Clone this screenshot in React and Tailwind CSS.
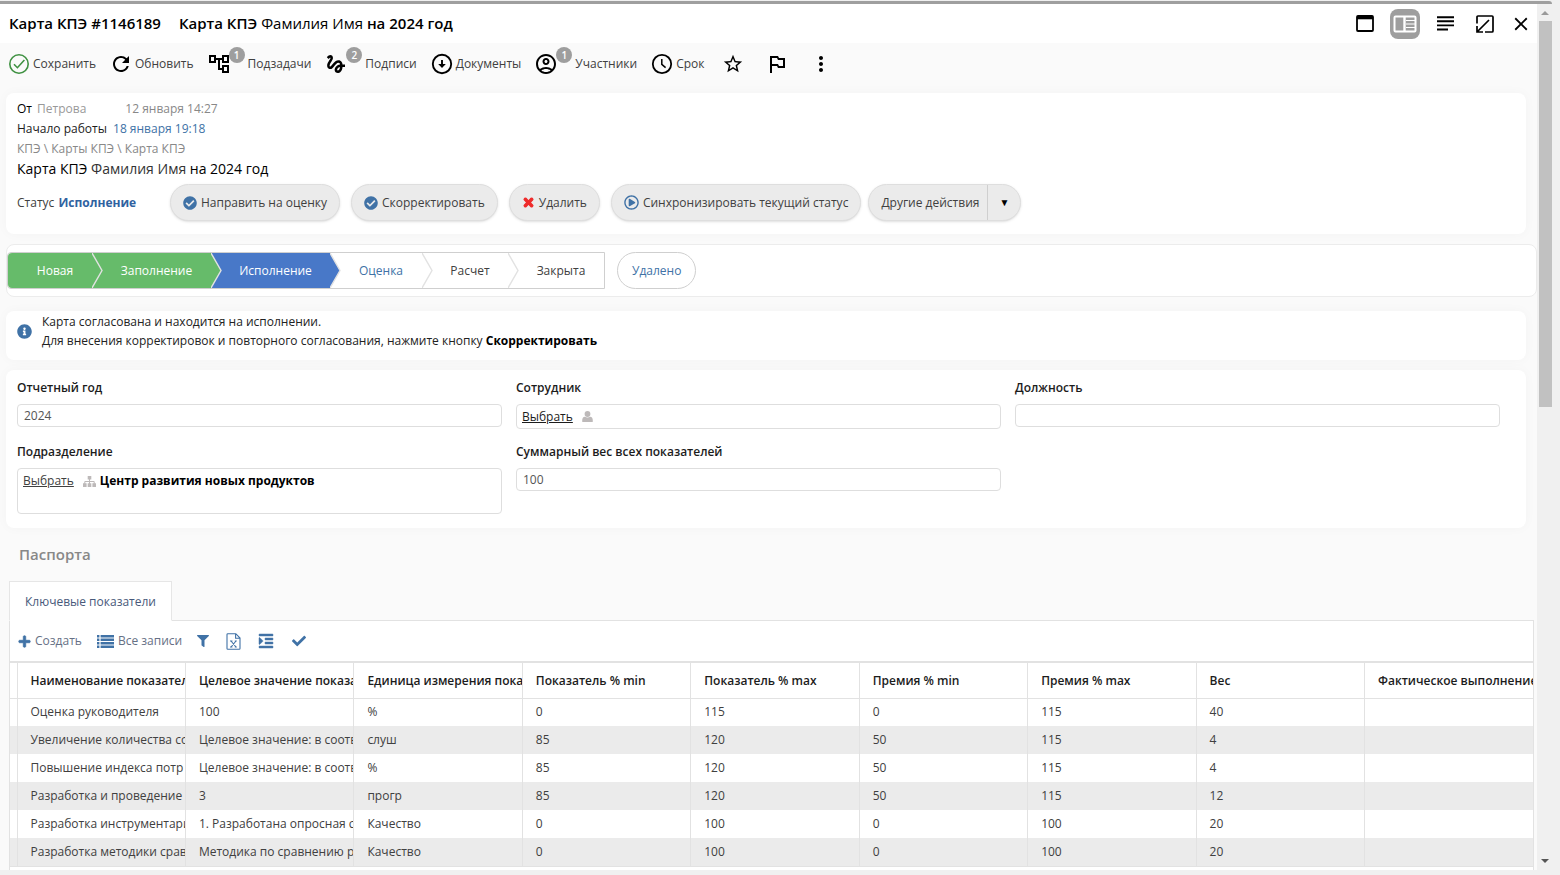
import React from "react";
import { FaCheck, FaCheckCircle, FaFilter, FaIndent, FaInfoCircle, FaPlus, FaRegPlayCircle, FaTimes } from "react-icons/fa";
import { MdClose, MdGesture, MdMoreVert, MdOutlineAccountCircle, MdOutlineAccountTree, MdOutlinedFlag, MdRefresh, MdStarBorder } from "react-icons/md";

const columns = [
    'Наименование показател',
    'Целевое значение показа',
    'Единица измерения пока',
    'Показатель % min',
    'Показатель % max',
    'Премия % min',
    'Премия % max',
    'Вес',
    'Фактическое выполнение',
];

const rows = [
    ['Оценка руководителя', '100', '%', '0', '115', '0', '115', '40', ''],
    ['Увеличение количества со', 'Целевое значение: в соотв', 'слуш', '85', '120', '50', '115', '4', ''],
    ['Повышение индекса потр', 'Целевое значение: в соотв', '%', '85', '120', '50', '115', '4', ''],
    ['Разработка и проведение', '3', 'прогр', '85', '120', '50', '115', '12', ''],
    ['Разработка инструментари', '1. Разработана опросная с', 'Качество', '0', '100', '0', '100', '20', ''],
    ['Разработка методики срав', 'Методика по сравнению р', 'Качество', '0', '100', '0', '100', '20', ''],
];

const SaveIcon = () => (
    <svg viewBox="0 0 24 24" className="w-6 h-6 text-[#3f9142]" fill="none" stroke="currentColor" strokeWidth="1.6">
        <circle cx="12" cy="12" r="9.2" />
        <path d="M7 12.3l3.4 3.4L17.4 8" />
    </svg>
);

const DownloadIcon = () => (
    <svg viewBox="0 0 24 24" className="w-6 h-6" fill="none" stroke="currentColor" strokeWidth="1.9">
        <circle cx="12" cy="12" r="9.200" />
        <path d="M12 8v5" />
        <path d="M8.2 12h7.6L12 16z" fill="currentColor" stroke="none" />
    </svg>
);

const ClockIcon = () => (
    <svg viewBox="0 0 24 24" className="w-6 h-6" fill="none" stroke="currentColor" strokeWidth="1.8">
        <circle cx="12" cy="12" r="9.2" />
        <path d="M11.8 7v5.4l3.8 3.2" strokeWidth="1.5" />
    </svg>
);

const WindowIcon = () => (
    <svg viewBox="0 0 18 17" className="w-[18px] h-[17px]" fill="none" stroke="currentColor" strokeWidth="1.8">
        <rect x="1" y="1" width="16" height="15" rx="1" />
        <path d="M1 2.6h16" strokeWidth="3.4" />
    </svg>
);

const SplitIcon = () => (
    <svg viewBox="0 0 24 18" className="w-6 h-[18px]" fill="none" stroke="white" strokeWidth="2">
        <rect x="1.5" y="1.5" width="21" height="15" rx="1" />
        <path d="M11.5 2v14" strokeWidth="2.4" />
        <path d="M13 5.5h9M13 9h9M13 12.5h9" strokeWidth="1.2" />
    </svg>
);

const NotesIcon = () => (
    <svg viewBox="0 0 17 15" className="w-[17px] h-[15px]" fill="none" stroke="currentColor" strokeWidth="1.9">
        <path d="M0 1.200h17M0 5.300h17M0 9.400h17M0 13.500h11" />
    </svg>
);

const PopinIcon = () => (
    <svg viewBox="0 0 18 18" className="w-[18px] h-[18px]" fill="none" stroke="currentColor" strokeWidth="1.7">
        <path d="M1 8.500V2q0-1 1-1h14q1 0 1 1v14q0 1-1 1H9" />
        <path d="M13 5L1.500 16.500M1 11V17h6" />
    </svg>
);

const ListIcon = () => (
    <svg viewBox="0 0 17 13" className="w-[17px] h-[13px] text-[#4072a6]" fill="none" stroke="currentColor" strokeWidth="2.4">
        <path d="M0 1.3h2.4M3.600 1.3H17M0 4.8h2.4M3.600 4.8H17M0 8.3h2.4M3.600 8.3H17M0 11.8h2.4M3.600 11.8H17" />
    </svg>
);

const ExcelIcon = () => (
    <svg viewBox="0 0 15 17" className="w-[15px] h-[17px] text-[#4072a6]" fill="none" stroke="currentColor" strokeWidth="1.1">
        <path d="M1 1.5q0-.8.8-.8h8L14 5v10.5q0 .8-.8.8H1.8q-.8 0-.8-.8zM9.6.8v4.4H14" />
        <path d="M5 8l5 6M10 8l-5 6M4 8h2.4M8.8 8h2M4 14h2.4M8.8 14h2" />
    </svg>
);

const PersonIcon = () => (
    <svg viewBox="0 0 11 11" className="w-[11px] h-[11px] text-[#bdb9b9]" fill="currentColor">
        <circle cx="5.5" cy="3" r="2.9" />
        <path d="M.3 11q-.6-5 2.6-5.3 2.6 1.5 5.2 0Q11.3 6 10.7 11z" />
    </svg>
);

const OrgIcon = () => (
    <svg viewBox="0 0 13 11" className="w-[13px] h-[11px] ml-[9px] mr-1 mt-1 text-[#bdb9b9]" fill="currentColor">
        <path d="M4.700 0h3.600v3.600H4.700zM0 7.200h3.600V11H0zM4.700 7.200h3.600V11H4.700zM9.400 7.200H13V11H9.400z" />
        <path d="M6.500 3v5M1.800 8V5.500h9.400V8" fill="none" stroke="currentColor" />
    </svg>
);

const ToolbarItem = ({icon, label, badge, title}) => (
    <button type="button" aria-label={title} className="flex items-center gap-[2px]">
        <span className="relative flex w-6 h-6 items-center justify-center text-black">
            {icon}
            {badge && (
                <span className="absolute left-[22px] -top-[5px] w-4 h-4 rounded-full bg-[#9e9e9e] text-white text-[10px] leading-4 font-semibold text-center">
                    {badge}
                </span>
            )}
        </span>
        {label && <span className={badge ? "ml-[15px]" : ""}>{label}</span>}
    </button>
);

const ActionButton = ({icon, children}) => (
    <button type="button" className="flex items-center gap-1 h-[37px] px-3 rounded-full bg-[#ebebeb] border border-[#dedede] shadow-sm">
        {icon}
        {children}
    </button>
);

const Card = ({className, children}) => (
    <section className={`bg-white rounded-lg shadow-[0_0_12px_rgba(0,0,0,0.03)] ${className}`}>
        {children}
    </section>
);

const Field = ({id, label, value}) => (
    <div>
        <label htmlFor={id} className="block h-[26px] leading-5 font-semibold text-[#1c1c1c]">{label}</label>
        <input id={id} type="text" defaultValue={value} className="block w-full h-[23px] px-[6px] border border-[#dedede] rounded text-[#555] focus:outline-none" />
    </div>
);

const Stage = ({label, fill, line, text, width, last}) => (
    <li className={`relative flex items-center justify-center h-full ${fill} ${text} ${width}`}>
        {label}
        {!last && (
            <svg viewBox="0 0 11 36" preserveAspectRatio="none" className={`absolute z-10 left-full top-0 w-[11px] h-full ${line}`}>
                <path d="M0 0L10 18L0 36z" fill="currentColor" />
                <path d="M0 0L10 18L0 36" fill="none" stroke="#e2e2e2" strokeWidth="1.4" />
            </svg>
        )}
    </li>
);

const App = () => {
    return (
        <div className="flex flex-col h-screen overflow-hidden bg-[#f0f0f0] pt-px pb-[5px] pr-2 font-['Open_Sans','Noto_Sans',sans-serif] text-[12px] text-[#404040]">
            <div className="h-[3px] shrink-0 bg-[#9f9f9f] rounded-tr-lg" />
            <div className="flex flex-1 min-h-0">
                <main className="flex-1 min-w-0 overflow-hidden bg-[#fafafa]">
                    <header className="flex items-center justify-between h-[39px] pl-[9px] bg-white text-black">
                        <h1 className="flex gap-[18px] text-[15px] font-semibold">
                            <span>Карта КПЭ #1146189</span>
                            <span>Карта КПЭ <span className="font-medium">Фамилия Имя</span> на 2024 год</span>
                        </h1>
                        <div className="flex items-center">
                            <button type="button" aria-label="Окно" className="flex w-10 justify-center"><WindowIcon /></button>
                            <button type="button" aria-label="Две панели" className="flex w-10 justify-center">
                                <span className="flex items-center justify-center w-[30px] h-[30px] rounded-lg bg-[#9e9e9e]"><SplitIcon /></span>
                            </button>
                            <button type="button" aria-label="Список" className="flex w-10 justify-center"><NotesIcon /></button>
                            <button type="button" aria-label="Свернуть" className="flex w-10 justify-center"><PopinIcon /></button>
                            <button type="button" aria-label="Закрыть" className="flex w-8 justify-center"><MdClose size={22} /></button>
                        </div>
                    </header>

                    <nav className="flex items-center gap-[13px] h-[42px] pl-[7px]">
                        <ToolbarItem icon={<SaveIcon />} label="Сохранить" />
                        <ToolbarItem icon={<MdRefresh size={26} />} label="Обновить" />
                        <ToolbarItem icon={<MdOutlineAccountTree size={24} />} label="Подзадачи" badge="1" />
                        <ToolbarItem icon={<MdGesture size={24} />} label="Подписи" badge="2" />
                        <ToolbarItem icon={<DownloadIcon />} label="Документы" />
                        <ToolbarItem icon={<MdOutlineAccountCircle size={24} />} label="Участники" badge="1" />
                        <ToolbarItem icon={<ClockIcon />} label="Срок" />
                        <div className="flex gap-5 pl-1">
                            <ToolbarItem icon={<MdStarBorder size={22} />} title="В избранное" />
                            <ToolbarItem icon={<MdOutlinedFlag size={24} />} title="Флаг" />
                            <ToolbarItem icon={<MdMoreVert size={24} />} title="Ещё" />
                        </div>
                    </nav>

                    <Card className="mt-2 ml-[6px] mr-[11px] pl-[11px] pt-[6px] h-[141px]">
                        <p className="leading-5">
                            <span className="text-black">От</span> <span className="ml-[2px] text-[#999]">Петрова</span>
                            <span className="ml-[39px] text-[#888]">12 января 14:27</span>
                        </p>
                        <p className="leading-5"><span className="text-[#1c1c1c]">Начало работы</span> <span className="ml-[3px] text-[#4072a6]">18 января 19:18</span></p>
                        <p className="leading-5 text-[#888]">КПЭ \ Карты КПЭ \ Карта КПЭ</p>
                        <p className="leading-5 text-[14px] text-black">Карта КПЭ <span className="text-[#333]">Фамилия Имя</span> на 2024 год</p>
                        <div className="flex items-center mt-[5px] gap-[11px]">
                            <div className="w-[142px]">Статус <b className="ml-px text-[#2f62a0]">Исполнение</b></div>
                            <ActionButton icon={<FaCheckCircle size={14} className="text-[#4072a6]" />}>Направить на оценку</ActionButton>
                            <ActionButton icon={<FaCheckCircle size={14} className="text-[#4072a6]" />}>Скорректировать</ActionButton>
                            <ActionButton icon={<FaTimes size={13} stroke="currentColor" strokeWidth="45" className="text-[#ee2b2b]" />}>Удалить</ActionButton>
                            <ActionButton icon={<FaRegPlayCircle size={15} className="text-[#4072a6]" />}>Синхронизировать текущий статус</ActionButton>
                            <div className="flex items-stretch h-[37px] -ml-1 rounded-full bg-[#ebebeb] border border-[#dedede] shadow-sm">
                                <button type="button" className="pl-3 pr-2">Другие действия</button>
                                <button type="button" aria-label="Ещё действия" className="w-[33px] border-l border-[#cfcfcf] text-black text-[10px]">▼</button>
                            </div>
                        </div>
                    </Card>

                    <section className="flex items-center gap-3 mt-[10px] ml-[6px] h-[53px] bg-white border border-[#ececec] rounded-lg">
                        <ol className="flex h-[37px] border border-[#cfcfcf] rounded-l">
                            <Stage label="Новая" fill="bg-[#66bb6a] rounded-l" line="text-[#66bb6a]" text="text-white pl-[10px]" width="w-[84px]" />
                            <Stage label="Заполнение" fill="bg-[#66bb6a]" line="text-[#66bb6a]" text="text-white pl-[10px]" width="w-[119px]" />
                            <Stage label="Исполнение" fill="bg-[#4878c8]" line="text-[#4878c8]" text="text-white pl-[10px]" width="w-[119px]" />
                            <Stage label="Оценка" fill="bg-white" line="text-white" text="text-[#4072a6] pl-[10px]" width="w-[92px]" />
                            <Stage label="Расчет" fill="bg-white" line="text-white" text="pl-[10px]" width="w-[86px]" />
                            <Stage label="Закрыта" fill="bg-white" line="text-white" text="pl-[10px]" width="w-[96px]" last />
                        </ol>
                        <button type="button" className="h-[37px] px-[14px] border border-[#cfcfcf] rounded-full text-[#4072a6]">Удалено</button>
                    </section>

                    <Card className="flex items-start gap-[10px] mt-[14px] ml-[6px] mr-[11px] pl-[11px] pt-px h-[49px]">
                        <FaInfoCircle size={15} className="mt-3 text-[#4072a6]" />
                        <p className="leading-[19px] text-[#222]">
                            Карта согласована и находится на исполнении.<br />
                            Для внесения корректировок и повторного согласования, нажмите кнопку <b className="text-black">Скорректировать</b>
                        </p>
                    </Card>

                    <Card className="grid grid-cols-3 gap-x-[14px] mt-[10px] ml-[6px] mr-[11px] pl-[11px] pr-[26px] pt-2 pb-[14px]">
                        <div className="h-16"><Field id="year" label="Отчетный год" value="2024" /></div>
                        <div>
                            <div className="h-[26px] leading-5 font-semibold text-[#1c1c1c]">Сотрудник</div>
                            <div className="flex items-center gap-[9px] h-[25px] px-[5px] border border-[#dedede] rounded">
                                <a href="#employee" className="underline text-[#1c1c1c]">Выбрать</a>
                                <PersonIcon />
                            </div>
                        </div>
                        <Field id="position" label="Должность" value="" />
                        <div>
                            <div className="h-[26px] leading-5 font-semibold text-[#1c1c1c]">Подразделение</div>
                            <div className="flex items-start h-[46px] px-[5px] pt-[3px] border border-[#dedede] rounded">
                                <a href="#department" className="underline">Выбрать</a>
                                <OrgIcon />
                                <b className="text-black">Центр развития новых продуктов</b>
                            </div>
                        </div>
                        <Field id="weight" label="Суммарный вес всех показателей" value="100" />
                    </Card>

                    <h2 className="mt-[14px] ml-[19px] leading-6 text-[15px] font-semibold text-[#888]">Паспорта</h2>

                    <section className="mt-[15px] ml-[9px] mr-[3px]">
                        <button type="button" className="block relative z-10 -mb-px h-10 px-[15px] pt-px bg-white border border-b-white border-[#e6e6e6] text-[#48597a]">Ключевые показатели</button>
                        <div className="bg-white border border-[#e2e2e2]">
                            <div className="flex items-center h-10 pl-2 text-[#667085]">
                                <button type="button" className="flex items-center gap-1"><FaPlus size={13} stroke="currentColor" strokeWidth="30" className="text-[#4072a6]" />Создать</button>
                                <button type="button" className="flex items-center gap-1 ml-[15px]"><ListIcon />Все записи</button>
                                <button type="button" aria-label="Фильтр" className="ml-[15px]"><FaFilter size={12} className="text-[#4072a6]" /></button>
                                <button type="button" aria-label="Экспорт в Excel" className="ml-[17px]"><ExcelIcon /></button>
                                <button type="button" aria-label="Отступ" className="ml-[17px]"><FaIndent size={16} stroke="currentColor" strokeWidth="15" className="text-[#4072a6]" /></button>
                                <button type="button" aria-label="Применить" className="ml-[18px]"><FaCheck size={14} className="text-[#4072a6]" /></button>
                            </div>
                            <table className="w-full table-fixed border-collapse border-t-2 border-[#e2e2e2]">
                                <thead>
                                    <tr className="h-9 border-b border-[#e2e2e2]">
                                        <td className="w-[7px]" />
                                        {columns.map((column) => (
                                            <th key={column} className="pl-[13px] pt-px border-l border-[#e2e2e2] text-left font-semibold text-[#1c1c1c] whitespace-nowrap overflow-hidden">{column}</th>
                                        ))}
                                    </tr>
                                </thead>
                                <tbody>
                                    {rows.map((row, i) => (
                                        <tr key={i} className="h-7 even:bg-[#ebebeb]">
                                            <td />
                                            {row.map((cell, j) => (
                                                <td key={j} className="pl-[13px] border-l border-[#e2e2e2] whitespace-nowrap overflow-hidden">{cell}</td>
                                            ))}
                                        </tr>
                                    ))}
                                </tbody>
                            </table>
                            <div className="h-10 border-t border-[#e2e2e2]" />
                        </div>
                    </section>
                </main>
                <div className="flex flex-col items-center w-[15px] py-[7px] pl-px text-[#555]">
                    <svg viewBox="0 0 8 4" className="w-2 h-1 text-[#9a9a9a]" fill="currentColor"><path d="M0 4L4 0L8 4z" /></svg>
                    <div className="self-end w-[13px] h-[386px] mt-[6px] bg-[#c1c1c1]" />
                    <svg viewBox="0 0 8 4" className="w-2 h-1 mt-auto" fill="currentColor"><path d="M0 0L4 4L8 0z" /></svg>
                </div>
            </div>
        </div>
    );
}

export default App;
